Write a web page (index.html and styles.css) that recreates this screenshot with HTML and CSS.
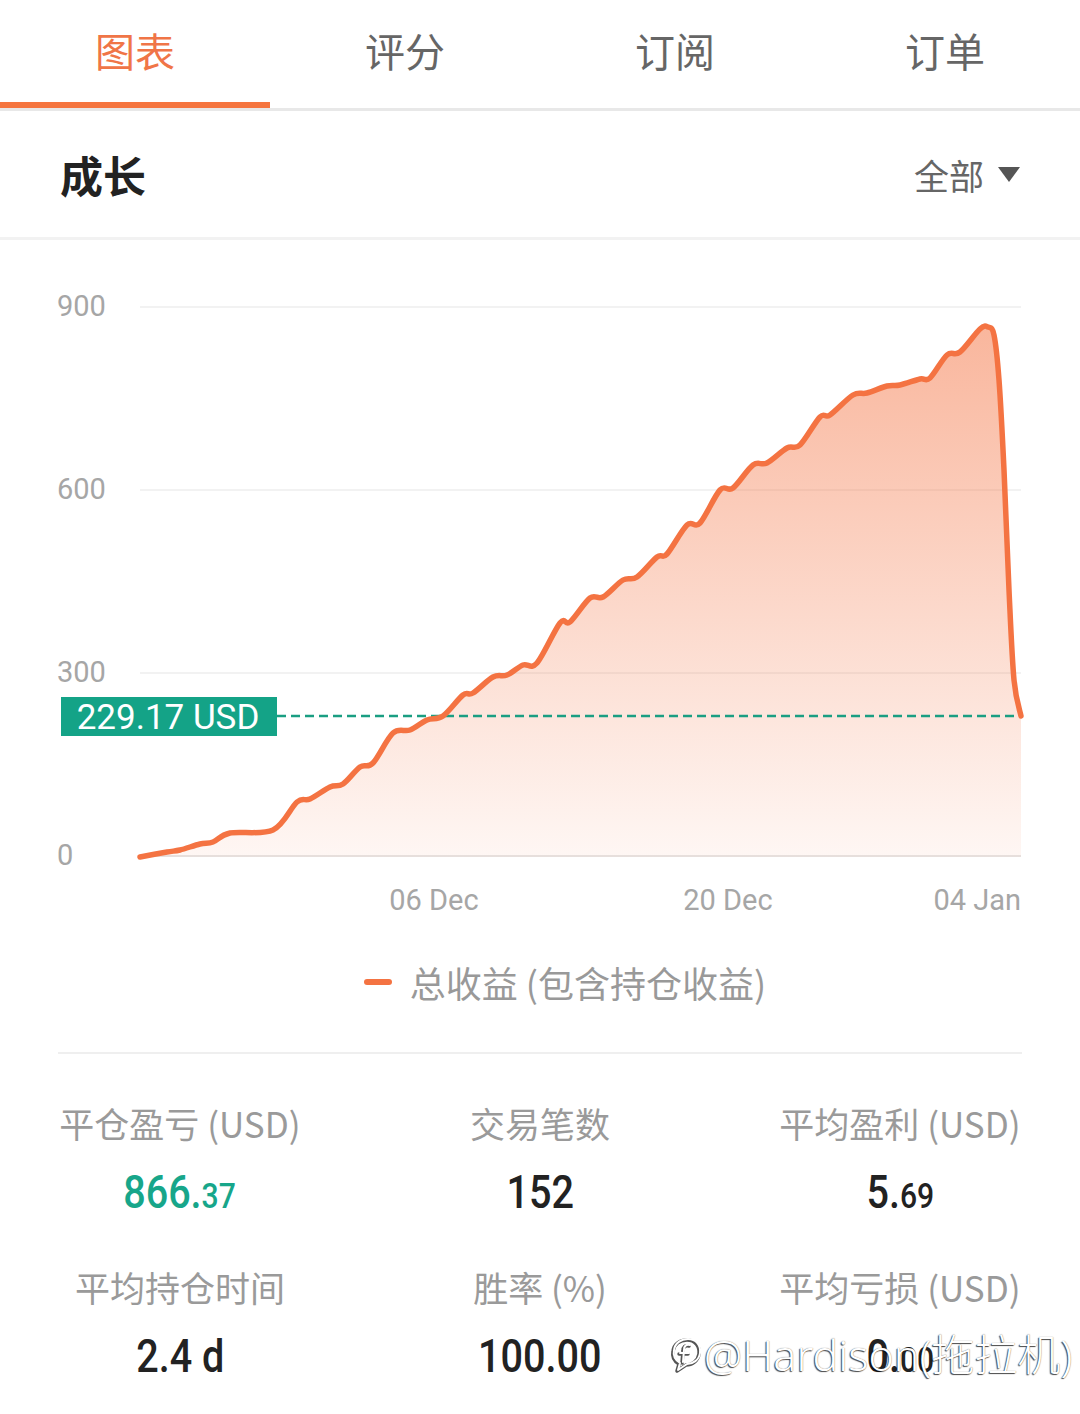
FILE: index.html
```html
<!DOCTYPE html>
<html lang="zh-CN">
  <head>
    <meta charset="UTF-8" />
    <meta name="viewport" content="width=device-width, initial-scale=1.0" />
    <title>图表</title>
    <link rel="stylesheet" href="styles.css">
  </head>
  <body>
    <div id="tabs">
      <div class="tab active">图表</div>
      <div class="tab">评分</div>
      <div class="tab">订阅</div>
      <div class="tab">订单</div>
    </div>

    <div id="header">
      <h1>成长</h1>
      <div class="filter">全部 <span class="caret"></span></div>
    </div>

    <svg id="chart" width="1080" height="690" viewBox="0 240 1080 690">
      <defs>
        <linearGradient id="area" gradientUnits="userSpaceOnUse" x1="0" y1="327" x2="0" y2="857">
          <stop offset="0" stop-color="#f47342" stop-opacity="0.52" />
          <stop offset="1" stop-color="#f47342" stop-opacity="0.06" />
        </linearGradient>
      </defs>
      <g class="grid">
        <line x1="140" y1="307" x2="1021" y2="307" />
        <line x1="140" y1="490" x2="1021" y2="490" />
        <line x1="140" y1="673" x2="1021" y2="673" />
      </g>
      <line class="base" x1="140" y1="856" x2="1021" y2="856" />
      <g class="ylabel">
        <text x="57" y="316">900</text>
        <text x="57" y="499">600</text>
        <text x="57" y="682">300</text>
        <text x="57" y="865">0</text>
      </g>
      <g class="xlabel">
        <text x="434" y="910" text-anchor="middle">06 Dec</text>
        <text x="728" y="910" text-anchor="middle">20 Dec</text>
        <text x="1021" y="910" text-anchor="end">04 Jan</text>
      </g>
      <path id="fill" fill="url(#area)" />
      <line class="avg" x1="277" y1="716" x2="1021" y2="716" />
      <path id="line" class="curve" />
      <rect class="tag" x="61" y="697" width="216" height="39" />
      <text class="tagtext" x="168" y="729" text-anchor="middle">229.17 USD</text>
    </svg>

    <div id="legend">
      <span class="dash"></span>
      <span>总收益 (包含持仓收益)</span>
    </div>

    <div id="stats">
      <div class="cell">
        <div class="label">平仓盈亏 (USD)</div>
        <div class="value green"><span>866.<small>37</small></span></div>
      </div>
      <div class="cell">
        <div class="label">交易笔数</div>
        <div class="value"><span>152</span></div>
      </div>
      <div class="cell">
        <div class="label">平均盈利 (USD)</div>
        <div class="value"><span>5.<small>69</small></span></div>
      </div>
      <div class="cell">
        <div class="label">平均持仓时间</div>
        <div class="value"><span>2.4 d</span></div>
      </div>
      <div class="cell">
        <div class="label">胜率 (%)</div>
        <div class="value"><span>100.00</span></div>
      </div>
      <div class="cell">
        <div class="label">平均亏损 (USD)</div>
        <div class="value"><span>0.<small>00</small></span></div>
      </div>
    </div>

    <div id="watermark">
      <svg width="36" height="42" viewBox="0 0 36 42">
        <g fill="none" stroke-linecap="round" stroke-linejoin="round">
          <path class="wm-shadow" d="M20 7 C28 7 33 13 32 21 C31 28 25 32 19 32 L10 38 L12 31 C7 28 5 23 6 18 C7 11 13 7 20 7 Z M22 13 C18 12 16 14 16 18 L15 30 M12 21 L21 21" />
          <path class="wm-line" d="M20 7 C28 7 33 13 32 21 C31 28 25 32 19 32 L10 38 L12 31 C7 28 5 23 6 18 C7 11 13 7 20 7 Z M22 13 C18 12 16 14 16 18 L15 30 M12 21 L21 21" />
        </g>
      </svg>
      <span>@Hardison(拖拉机)</span>
    </div>

    <script>
      var points = [
        [140, 857], [167, 852], [180, 850], [200, 844], [213, 842], [230, 833],
        [273, 830], [297, 802], [310, 799], [330, 787], [343, 784], [360, 767],
        [373, 763], [393, 733], [410, 730], [427, 720], [443, 716], [463, 695],
        [473, 693], [493, 677], [507, 675], [523, 665], [537, 663], [560, 623],
        [570, 622], [590, 598], [603, 597], [623, 580], [637, 577], [657, 557],
        [667, 554], [687, 525], [700, 523], [720, 490], [733, 488], [753, 465],
        [767, 463], [787, 448], [800, 445], [820, 417], [830, 415], [853, 395],
        [867, 393], [887, 386], [900, 385], [920, 379], [930, 378], [947, 355],
        [960, 352], [980, 329], [988, 327], [994, 335], [999, 380], [1004, 470],
        [1009, 590], [1014, 680], [1021, 716],
      ];

      // catmull-rom -> bezier
      function smooth(pts) {
        let d = "M" + pts[0][0] + "," + pts[0][1];
        for (let i = 0; i < pts.length - 1; i++) {
          const p0 = pts[i - 1] || pts[i];
          const p1 = pts[i];
          const p2 = pts[i + 1];
          const p3 = pts[i + 2] || p2;
          const c1x = p1[0] + (p2[0] - p0[0]) / 6;
          const c1y = p1[1] + (p2[1] - p0[1]) / 6;
          const c2x = p2[0] - (p3[0] - p1[0]) / 6;
          const c2y = p2[1] - (p3[1] - p1[1]) / 6;
          d += " C" + c1x + "," + c1y + " " + c2x + "," + c2y + " " + p2[0] + "," + p2[1];
        }
        return d;
      }

      const d = smooth(points);
      document.querySelector("#line").setAttribute("d", d);
      document.querySelector("#fill").setAttribute("d", d + " L1021,857 L140,857 Z");
    </script>
  </body>
</html>
```

FILE: styles.css
```css
body {
  margin: 0;
  font-family: "Noto Sans CJK SC", "Noto Sans", sans-serif;
  background-color: white;
  position: relative;
}

#tabs {
  display: flex;
  border-bottom: 3px solid #e8e8e8;
}

.tab {
  flex: 1;
  height: 102px;
  line-height: 100px;
  text-align: center;
  font-size: 40px;
  color: #666;
  border-bottom: 6px solid transparent;
}

.tab.active {
  color: #f07547;
  border-bottom-color: #f5753f;
}

#header {
  display: flex;
  justify-content: space-between;
  align-items: center;
  height: 126px;
  padding: 0 60px;
  border-bottom: 3px solid #f2f2f2;
}

h1 {
  margin: 0;
  font-size: 43px;
  font-weight: bold;
  color: #222;
}

.filter {
  display: flex;
  align-items: center;
  font-size: 35px;
  color: #666;
}

.caret {
  margin-left: 14px;
  width: 0;
  height: 0;
  border-left: 11px solid transparent;
  border-right: 11px solid transparent;
  border-top: 15px solid #555;
}

#chart {
  display: block;
}

.grid line {
  stroke: #f2f2f2;
  stroke-width: 2;
}

.base {
  stroke: #e6e6e6;
  stroke-width: 2;
}

.ylabel text,
.xlabel text {
  font-family: Roboto, "Noto Sans", sans-serif;
  font-size: 29px;
  fill: #a6a6a6;
}

.curve {
  fill: none;
  stroke: #f47342;
  stroke-width: 5.5;
  stroke-linejoin: round;
  stroke-linecap: round;
}

.avg {
  stroke: #1a9e82;
  stroke-width: 2.5;
  stroke-dasharray: 9 5;
}

.tag {
  fill: #14a387;
}

.tagtext {
  font-family: Roboto, "Noto Sans", sans-serif;
  font-size: 35px;
  fill: white;
}

#legend {
  display: flex;
  justify-content: center;
  align-items: center;
  height: 104px;
  padding: 0 0 18px 50px;
  margin: 0 58px;
  border-bottom: 2px solid #efefef;
  font-size: 36px;
  color: #999;
}

.dash {
  width: 28px;
  height: 6px;
  border-radius: 3px;
  background-color: #f47342;
  margin-right: 18px;
}

#stats {
  display: grid;
  grid-template-columns: 1fr 1fr 1fr;
  row-gap: 40px;
  padding-top: 44px;
}

.cell {
  text-align: center;
}

.label {
  height: 50px;
  line-height: 50px;
  font-size: 35px;
  color: #9a9a9a;
}

.value {
  margin-top: 14px;
  height: 60px;
  line-height: 60px;
  font-family: Roboto, "Noto Sans", sans-serif;
  font-size: 46px;
  font-weight: 500;
  color: #222;
}

.value span {
  display: inline-block;
  transform: scaleX(0.86);
}

.value small {
  font-size: 35px;
}

.green {
  color: #17a68a;
}

#watermark {
  position: absolute;
  left: 668px;
  top: 1321px;
  display: flex;
  align-items: center;
  font-family: "Noto Sans", "Noto Sans CJK SC", sans-serif;
  font-size: 43px;
  font-weight: 300;
  color: white;
  text-shadow: -1px 1px 1px rgba(0, 0, 0, 0.7), 0 0 1px rgba(0, 0, 0, 0.6);
}

.wm-shadow {
  stroke: #555;
  stroke-width: 3.5;
  transform: translate(-1px, 1px);
}

.wm-line {
  stroke: white;
  stroke-width: 2;
}
```
